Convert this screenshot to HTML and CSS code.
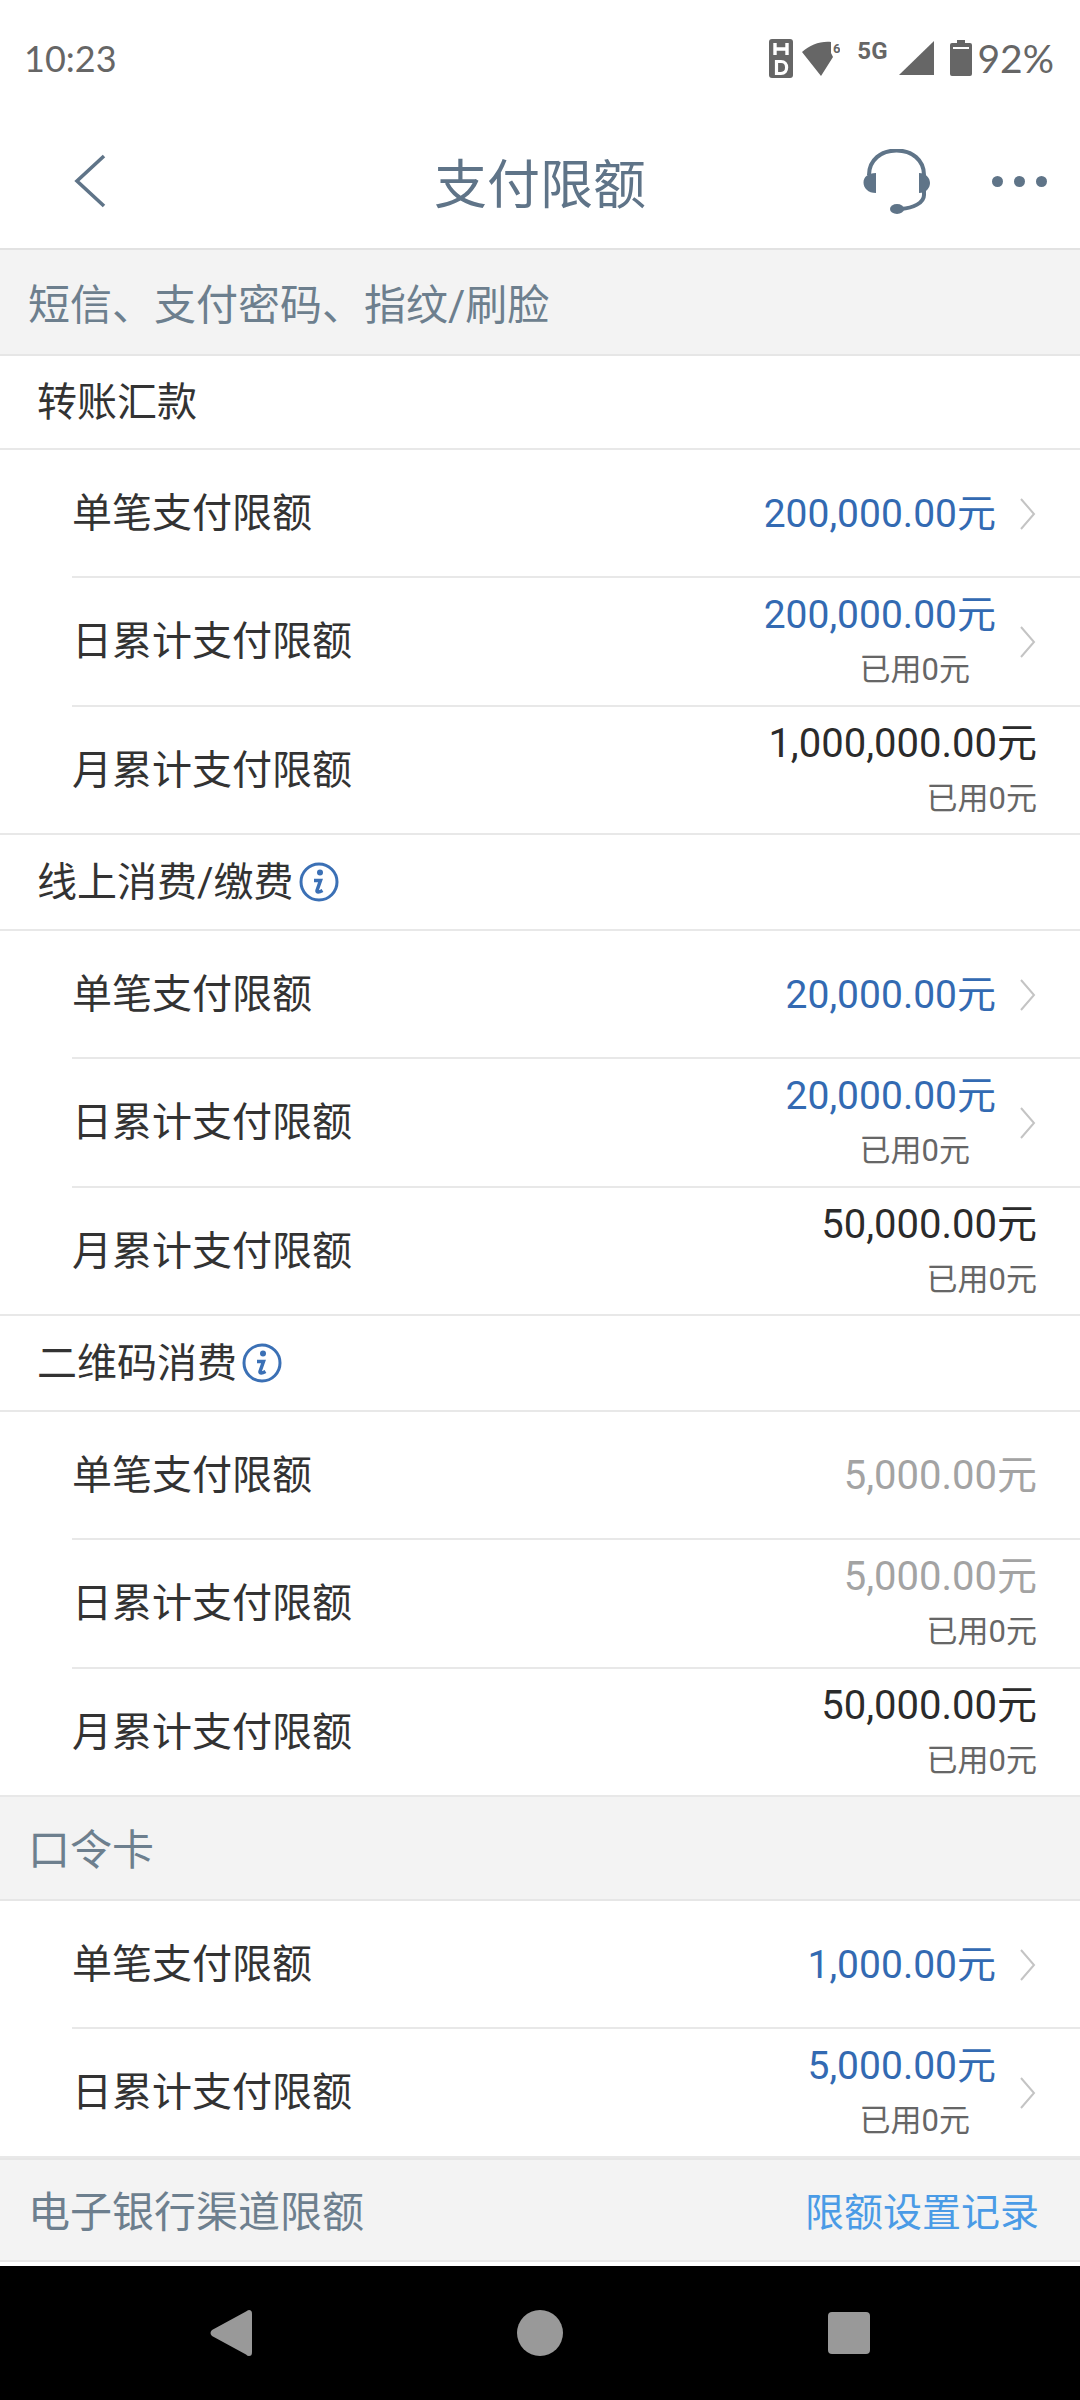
FILE: index.html
```html
<!DOCTYPE html>
<html lang="zh-CN">
<head>
  <meta charset="UTF-8">
  <title>支付限额</title>
  <link rel="stylesheet" href="styles.css">
</head>
<body>
<div class="phone">

  <div class="status-bar">
    <span class="time">10:23</span>
    <div class="status-icons">
      <svg class="ic-hd" width="24" height="39" viewBox="0 0 24 39">
        <rect width="24" height="39" rx="3" fill="#666"/>
        <path d="M6 4v12M18 4v12M6 10h12" stroke="#fff" stroke-width="3.4" fill="none"/>
        <path d="M7.500 22.500h4.500c7.500 0 7.500 12 0 12H7.500z" stroke="#fff" stroke-width="3.2" fill="none"/>
      </svg>
      <svg class="ic-wifi" width="38" height="35" viewBox="0 0 38 35">
        <path d="M0 11C8 4 18 0 29 1v11l2 4-12 19z" fill="#666"/>
        <text x="31" y="12" class="wifi-six">6</text>
      </svg>
      <span class="five-g">5G</span>
      <svg class="ic-signal" width="35" height="34" viewBox="0 0 35 34"><path d="M0 34L35 0v34z" fill="#666"/></svg>
      <svg class="ic-batt" width="22" height="36" viewBox="0 0 22 36">
        <path d="M7 0h8v3h5a2 2 0 0 1 2 2v29a2 2 0 0 1-2 2H2a2 2 0 0 1-2-2V5a2 2 0 0 1 2-2h5z" fill="#666"/>
        <rect x="3" y="7" width="16" height="2" fill="#fff"/>
      </svg>
      <span class="batt-text">92%</span>
    </div>
  </div>

  <div class="nav-bar">
    <svg class="nav-back" width="34" height="54" viewBox="0 0 34 54"><path d="M31 2L4 27l27 25" fill="none" stroke="#5f7488" stroke-width="3.6"/></svg>
    <h1 class="nav-title">支付限额</h1>
    <svg class="nav-service" width="67" height="65" viewBox="0 0 67 65">
      <path d="M6 26C6 11 18 1.500 33.500 1.500S61 11 61 26V46C61 54 50 59 38 60" fill="none" stroke="#5f7488" stroke-width="4"/>
      <path d="M13 24v20c-8 0-12.500-5-12.500-10.500S5 24 13 24zM56 24v20c7 0 11-5 11-10S63 24 56 24z" fill="#5f7488"/>
      <ellipse cx="34" cy="60" rx="7" ry="5" fill="#5f7488"/>
    </svg>
    <div class="nav-more"><i></i><i></i><i></i></div>
  </div>

  <div class="section-bar first">短信、支付密码、指纹/刷脸</div>

  <div class="group-head first"><span>转账汇款</span></div>
  <div class="row">
    <span class="row-label">单笔支付限额</span>
    <div class="row-right has-chev"><div class="values"><div class="amount link">200,000.00元</div></div><svg class="chev" width="17" height="32" viewBox="0 0 17 32"><path d="M2 1l13 15L2 31" fill="none" stroke="#c4c4c4" stroke-width="2"/></svg></div>
  </div>
  <div class="row">
    <span class="row-label">日累计支付限额</span>
    <div class="row-right has-chev"><div class="values two"><div class="amount link">200,000.00元</div><div class="used">已用0元</div></div><svg class="chev" width="17" height="32" viewBox="0 0 17 32"><path d="M2 1l13 15L2 31" fill="none" stroke="#c4c4c4" stroke-width="2"/></svg></div>
  </div>
  <div class="row last">
    <span class="row-label">月累计支付限额</span>
    <div class="row-right"><div class="values two"><div class="amount">1,000,000.00元</div><div class="used">已用0元</div></div></div>
  </div>

  <div class="group-head"><span>线上消费/缴费</span><svg class="info" width="40" height="40" viewBox="0 0 40 40"><circle cx="20" cy="20" r="18" fill="none" stroke="#3b70b5" stroke-width="3"/><circle cx="21" cy="10.500" r="3" fill="#3b70b5"/><path d="M15 18.500h6.500L18 28.500c-.5 2 2 2 5.500 0" fill="none" stroke="#3b70b5" stroke-width="3.500"/></svg></div>
  <div class="row">
    <span class="row-label">单笔支付限额</span>
    <div class="row-right has-chev"><div class="values"><div class="amount link">20,000.00元</div></div><svg class="chev" width="17" height="32" viewBox="0 0 17 32"><path d="M2 1l13 15L2 31" fill="none" stroke="#c4c4c4" stroke-width="2"/></svg></div>
  </div>
  <div class="row">
    <span class="row-label">日累计支付限额</span>
    <div class="row-right has-chev"><div class="values two"><div class="amount link">20,000.00元</div><div class="used">已用0元</div></div><svg class="chev" width="17" height="32" viewBox="0 0 17 32"><path d="M2 1l13 15L2 31" fill="none" stroke="#c4c4c4" stroke-width="2"/></svg></div>
  </div>
  <div class="row last">
    <span class="row-label">月累计支付限额</span>
    <div class="row-right"><div class="values two"><div class="amount">50,000.00元</div><div class="used">已用0元</div></div></div>
  </div>

  <div class="group-head"><span>二维码消费</span><svg class="info" width="40" height="40" viewBox="0 0 40 40"><circle cx="20" cy="20" r="18" fill="none" stroke="#3b70b5" stroke-width="3"/><circle cx="21" cy="10.500" r="3" fill="#3b70b5"/><path d="M15 18.500h6.500L18 28.500c-.5 2 2 2 5.500 0" fill="none" stroke="#3b70b5" stroke-width="3.500"/></svg></div>
  <div class="row">
    <span class="row-label">单笔支付限额</span>
    <div class="row-right"><div class="values"><div class="amount off">5,000.00元</div></div></div>
  </div>
  <div class="row">
    <span class="row-label">日累计支付限额</span>
    <div class="row-right"><div class="values two"><div class="amount off">5,000.00元</div><div class="used">已用0元</div></div></div>
  </div>
  <div class="row last">
    <span class="row-label">月累计支付限额</span>
    <div class="row-right"><div class="values two"><div class="amount">50,000.00元</div><div class="used">已用0元</div></div></div>
  </div>

  <div class="section-bar">口令卡</div>
  <div class="row">
    <span class="row-label">单笔支付限额</span>
    <div class="row-right has-chev"><div class="values"><div class="amount link">1,000.00元</div></div><svg class="chev" width="17" height="32" viewBox="0 0 17 32"><path d="M2 1l13 15L2 31" fill="none" stroke="#c4c4c4" stroke-width="2"/></svg></div>
  </div>
  <div class="row last">
    <span class="row-label">日累计支付限额</span>
    <div class="row-right has-chev"><div class="values two"><div class="amount link">5,000.00元</div><div class="used">已用0元</div></div><svg class="chev" width="17" height="32" viewBox="0 0 17 32"><path d="M2 1l13 15L2 31" fill="none" stroke="#c4c4c4" stroke-width="2"/></svg></div>
  </div>

  <div class="section-bar split">
    <span>电子银行渠道限额</span>
    <span class="record">限额设置记录</span>
  </div>
  <div class="gap"></div>

  <div class="sys-nav">
    <svg width="42" height="46" viewBox="0 0 42 46"><path d="M39 0c2 0 3 1 3 4v38c0 3-1 4-3 4-1 0-2-.5-3-1.500L2 26c-2-2-2-4 0-6L36 1.500C37 .5 38 0 39 0z" fill="#999"/></svg>
    <div class="sys-home"></div>
    <div class="sys-recent"></div>
  </div>

</div>
</body>
</html>
```

FILE: styles.css
```css
* {
  box-sizing: border-box;
}

body {
  margin: 0;
  font-family: Roboto, "Noto Sans CJK SC", sans-serif;
  background-color: #fff;
}

.phone {
  width: 1080px;
  height: 2400px;
  display: flex;
  flex-direction: column;
  overflow: hidden;
}

/* status bar */
.status-bar {
  height: 116px;
  flex: none;
  display: flex;
  justify-content: space-between;
  align-items: center;
  padding: 0 26px 0 24px;
  color: #666;
}

.time {
  font-family: Lato, sans-serif;
  font-size: 36px;
}

.status-icons {
  display: flex;
  align-items: center;
}

.ic-hd {
  margin-right: 9px;
}

.ic-wifi {
  margin-right: 17px;
}

.wifi-six {
  font-family: Roboto, sans-serif;
  font-size: 13px;
  font-weight: 700;
  fill: #666;
}

.five-g {
  font-size: 24px;
  font-weight: 700;
  margin: 0 11px 14px 0;
}

.ic-signal {
  margin-right: 16px;
}

.ic-batt {
  margin-right: 6px;
}

.batt-text {
  font-family: Lato, sans-serif;
  font-size: 39px;
}

/* nav */
.nav-bar {
  height: 134px;
  flex: none;
  display: flex;
  align-items: center;
  padding: 0 33px 2px 73px;
  border-bottom: 2px solid #e2e2e2;
  position: relative;
}

.nav-title {
  position: absolute;
  left: 0;
  right: 0;
  text-align: center;
  margin: 0;
  font-size: 53px;
  font-weight: 400;
  color: #5f7488;
}

.nav-service {
  margin-left: auto;
  margin-right: 62px;
}

.nav-more {
  display: flex;
  gap: 11px;
}

.nav-more i {
  width: 11px;
  height: 11px;
  border-radius: 50%;
  background-color: #5f7488;
}

/* sections */
.section-bar {
  height: 104px;
  flex: none;
  display: flex;
  align-items: center;
  padding: 0 28px 2px;
  background-color: #f3f3f3;
  border-bottom: 2px solid #e6e6e6;
  color: #6d7f8e;
  font-size: 42px;
}

.section-bar.first {
  height: 106px;
}

.section-bar.split {
  justify-content: space-between;
  padding-right: 41px;
  border-top: 2px solid #e6e6e6;
}

.record {
  font-size: 39px;
  color: #4a9be6;
}

.group-head {
  height: 96px;
  flex: none;
  display: flex;
  align-items: center;
  gap: 5px;
  padding-left: 37px;
  border-bottom: 2px solid #e8e8e8;
  color: #333;
  font-size: 40px;
}

.group-head.first {
  height: 94px;
}

.group-head span {
  margin-bottom: 6px;
}

/* rows */
.row {
  height: 128.33px;
  flex: none;
  margin-left: 72px;
  padding-right: 43px;
  display: flex;
  justify-content: space-between;
  align-items: center;
  border-bottom: 2px solid #e8e8e8;
}

.row.last {
  margin-left: 0;
  padding-left: 72px;
}

.row-label {
  color: #333;
  font-size: 40px;
  margin-bottom: 6px;
}

.row-right {
  display: flex;
  align-items: center;
  gap: 23px;
}

.has-chev {
  margin-right: 1px;
}

.chev {
  margin-top: 2px;
}

.values {
  padding-top: 2px;
  text-align: right;
}

.values.two {
  padding-top: 8px;
}

.amount {
  font-size: 40px;
  line-height: 50px;
  color: #2b2b2b;
}

.amount.link {
  font-size: 39px;
  color: #336ab2;
}

.amount.off {
  color: #a3a3a3;
}

.used {
  font-size: 31px;
  line-height: 60px;
  color: #666;
}

.has-chev .used {
  margin-right: 26px;
}

.gap {
  height: 4px;
  flex: none;
}

/* android nav */
.sys-nav {
  flex: 1;
  background-color: #000;
  display: flex;
  align-items: center;
  padding-left: 210px;
}

.sys-home {
  width: 46px;
  height: 46px;
  margin-left: 265px;
  border-radius: 50%;
  background-color: #999;
}

.sys-recent {
  width: 42px;
  height: 42px;
  margin-left: 265px;
  border-radius: 4px;
  background-color: #999;
}
```
